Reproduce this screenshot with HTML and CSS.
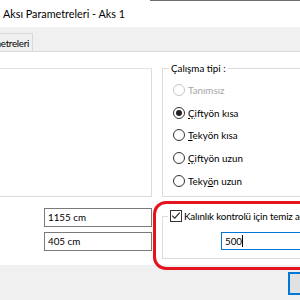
FILE: index.html
```html
<!DOCTYPE html>
<html lang="tr">
<head>
<meta charset="utf-8">
<link rel="stylesheet" href="styles.css">
</head>
<body>
<div class="screen">
  <div class="edge"></div>
  <div class="titlebar">Aksı Parametreleri - Aks 1</div>
  <div class="tabstrip"><div class="tab">Parametreleri</div></div>
  <div class="page">
    <div class="row1">
      <div class="group leftgroup">
        <div class="cutlabel">Sabit aralıklı katı</div>
      </div>
      <div class="group typegroup">
        <div class="gtitle">Çalışma tipi :</div>
        <div class="radios">
          <div class="radio disabled"><span class="circle"></span><span>Tanımsız</span></div>
          <div class="radio"><span class="circle on"></span><span><u>Ç</u>iftyön kısa</span></div>
          <div class="radio"><span class="circle"></span><span><u>T</u>ekyön kısa</span></div>
          <div class="radio"><span class="circle"></span><span><u>Ç</u>iftyön uzun</span></div>
          <div class="radio"><span class="circle"></span><span>Teky<u>ö</u>n uzun</span></div>
        </div>
      </div>
    </div>
    <div class="row2">
      <div class="fields">
        <div class="textbox">1155 cm</div>
        <div class="textbox">405 cm</div>
      </div>
      <div class="group checkgroup">
        <div class="checktitle">
          <span class="checkbox"><svg width="11" height="11" viewBox="0 0 11 11"><path d="M1.3 5.6 L4.1 8.4 L9.6 2.3" fill="none" stroke="#222" stroke-width="1.2"/></svg></span>
          <span>Kalınlık kontrolü için temiz açıklık</span>
        </div>
        <div class="focusbox">500<span class="caret"></span></div>
      </div>
    </div>
  </div>
  <div class="footer">
    <div class="okbtn">Tamam</div>
  </div>
  <div class="redmark"></div>
</div>
</body>
</html>
```
FILE: styles.css
```css
html, body {
  margin: 0;
  padding: 0;
}
body {
  font-family: Lato, "Noto Sans", sans-serif;
  font-size: 9.8px;
  color: #000;
  background: #f0f0f0;
}
.screen {
  position: relative;
  width: 300px;
  height: 300px;
  overflow: hidden;
  background: #fff;
}
.edge {
  height: 1px;
  margin-left: 150px;
  background: #6f6f6f;
}
.titlebar {
  height: 26px;
  line-height: 26px;
  padding-left: 3px;
  font-size: 10.8px;
  background: #fff;
  white-space: nowrap;
}
.tabstrip {
  height: 24px;
  background: #f0f0f0;
  border-bottom: 1px solid #d9d9d9;
  display: flex;
  align-items: flex-end;
}
.tab {
  box-sizing: border-box;
  width: 33px;
  height: 18px;
  border: 1px solid #d9d9d9;
  border-bottom: none;
  border-left: none;
  background: #f0f0f0;
  display: flex;
  justify-content: flex-end;
  align-items: center;
  padding-right: 3px;
  white-space: nowrap;
  letter-spacing: -0.3px;
}
.page {
  height: 213px;
  background: #fff;
}
.row1 {
  display: flex;
  padding-top: 16px;
  align-items: stretch;
}
.group {
  border: 1px solid #dcdcdc;
  box-sizing: border-box;
  flex-shrink: 0;
}
.leftgroup {
  margin-left: -20px;
  width: 172px;
  display: flex;
  align-items: flex-end;
  border-top-color: #e3e3e3;
}
.cutlabel {
  white-space: nowrap;
  margin-left: -64px;
  margin-bottom: 9px;
  line-height: 12px;
}
.typegroup {
  margin-left: 10px;
  width: 160px;
  padding-bottom: 4px;
}
.gtitle {
  width: max-content;
  margin: -8px 0 0 6px;
  padding: 0 2px;
  line-height: 14px;
  background: #fff;
}
.radios {
  margin-top: 4px;
  padding-left: 10px;
}
.radio {
  height: 22.6px;
  display: flex;
  align-items: center;
  gap: 3px;
  white-space: nowrap;
}
.circle {
  box-sizing: border-box;
  width: 12px;
  height: 12px;
  border: 1px solid #333;
  border-radius: 50%;
  background: #fff;
  display: flex;
  align-items: center;
  justify-content: center;
}
.circle.on::after {
  content: "";
  width: 6px;
  height: 6px;
  border-radius: 50%;
  background: #222;
}
.radio.disabled {
  color: #a8a8a8;
}
.radio.disabled .circle {
  border-color: #c6c6c6;
}
u {
  text-decoration-thickness: 1px;
  text-underline-offset: 1px;
}
.row2 {
  display: flex;
}
.fields {
  display: flex;
  flex-direction: column;
  gap: 5px;
  margin-left: 44px;
  padding-top: 11px;
  width: 108px;
  flex-shrink: 0;
}
.textbox {
  box-sizing: border-box;
  height: 19px;
  border: 1px solid #7a7a7a;
  padding-left: 3px;
  line-height: 17px;
  white-space: nowrap;
}
.checkgroup {
  margin-left: 10px;
  margin-top: 19px;
  width: 160px;
  height: 43px;
}
.checktitle {
  display: flex;
  align-items: center;
  gap: 2px;
  margin: -8px 0 0 5px;
  padding: 0 2px;
  height: 14px;
  background: #fff;
  white-space: nowrap;
  width: max-content;
  letter-spacing: -0.15px;
}
.checkbox {
  box-sizing: border-box;
  width: 12px;
  height: 12px;
  border: 1px solid #333;
  display: flex;
  align-items: center;
  justify-content: center;
  background: #fff;
}
.focusbox {
  box-sizing: border-box;
  margin: 9px 0 0 58px;
  height: 18px;
  border: 1px solid #0078d7;
  padding-left: 3px;
  line-height: 16px;
  display: flex;
  align-items: center;
}
.caret {
  display: inline-block;
  width: 1px;
  height: 12px;
  background: #000;
}
.footer {
  height: 35px;
  background: #f0f0f0;
  display: flex;
  justify-content: flex-end;
  align-items: flex-start;
  padding-top: 7px;
  box-sizing: border-box;
}
.okbtn {
  box-sizing: border-box;
  width: 75px;
  height: 23px;
  margin-right: -63px;
  border: 2px solid #0078d7;
  background: #e1e1e1;
  text-align: center;
  line-height: 19px;
  flex-shrink: 0;
}
.redmark {
  position: absolute;
  left: 153px;
  top: 201px;
  width: 170px;
  height: 69px;
  box-sizing: border-box;
  border: 3px solid #e4141e;
  border-radius: 13px;
}
```
